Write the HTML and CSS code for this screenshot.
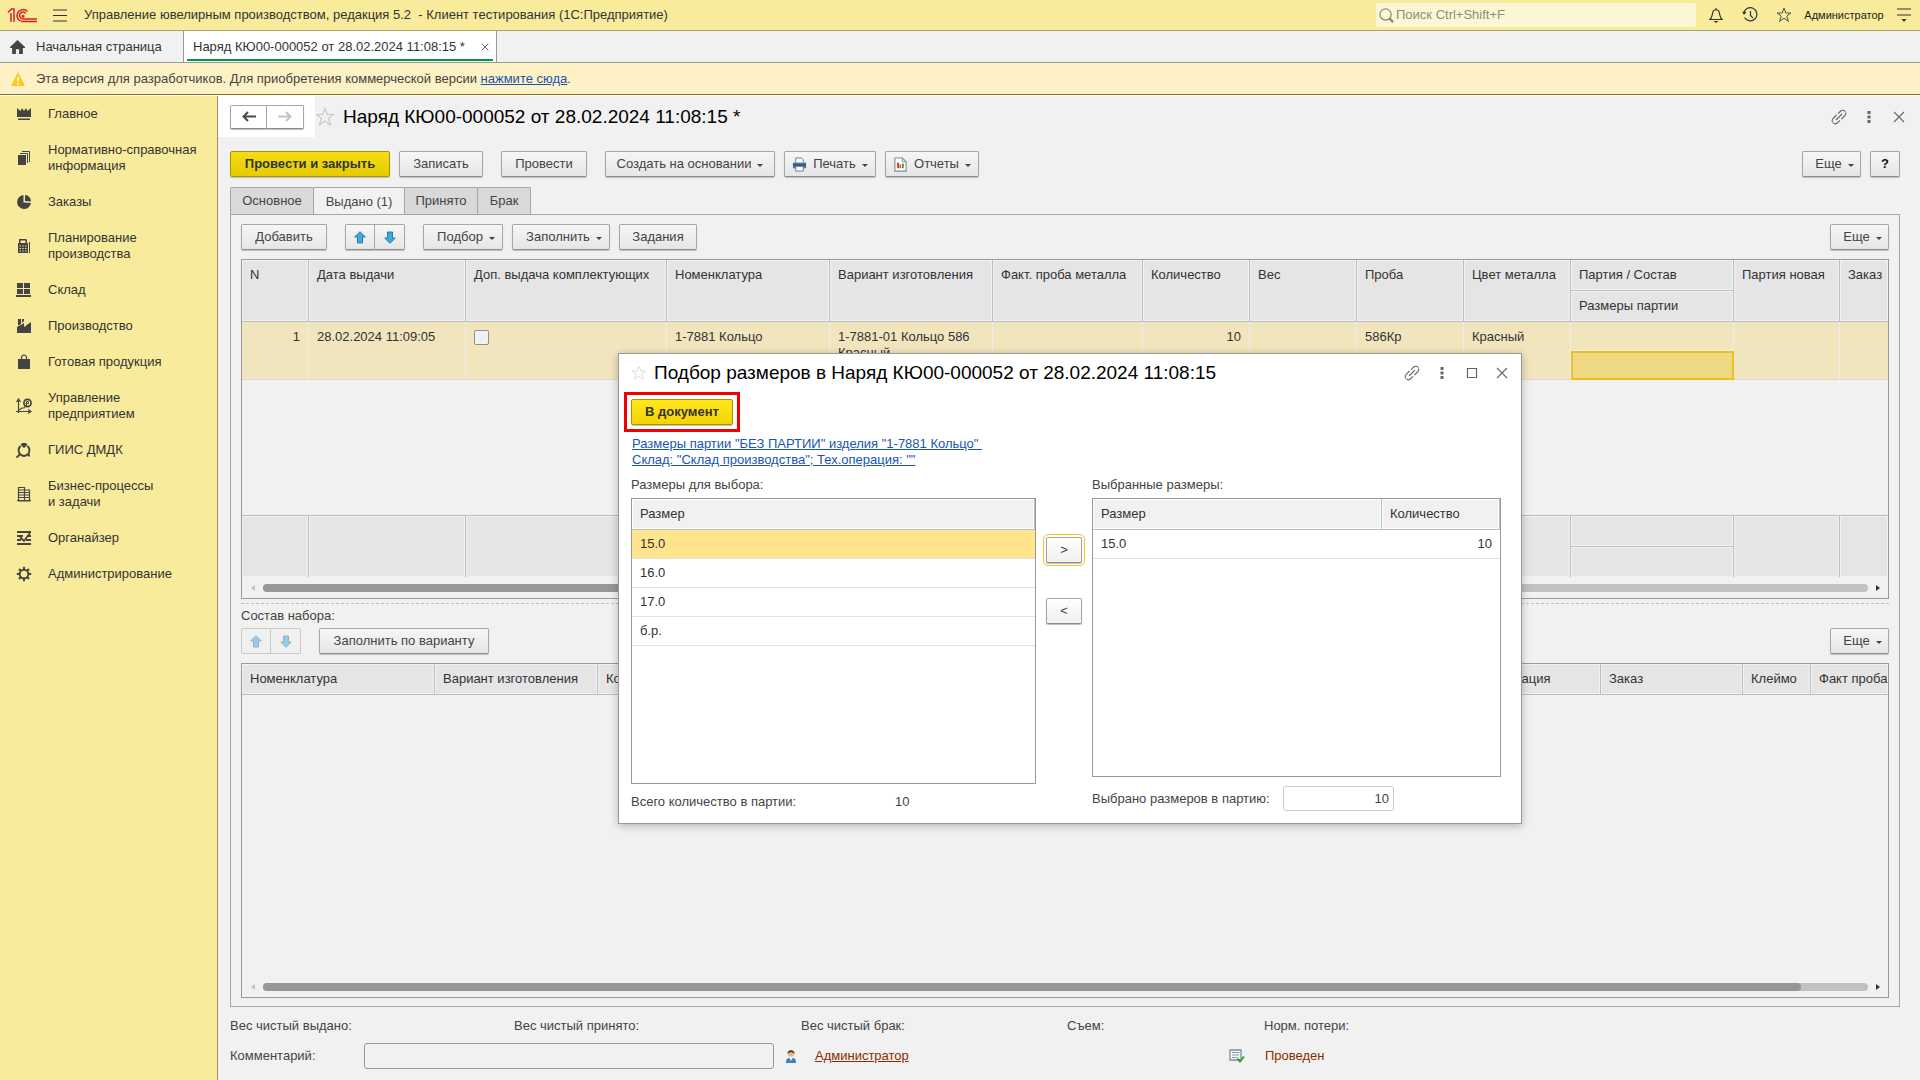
FILE: index.html
```html
<!DOCTYPE html>
<html lang="ru">
<head>
<meta charset="utf-8">
<title>Наряд КЮ00-000052</title>
<meta name="viewport" content="width=device-width, initial-scale=1">
<link rel="stylesheet" href="styles.css">
</head>
<body>
<svg class="defs" aria-hidden="true">
  <symbol id="i-star" viewBox="0 0 20 20"><path d="M10 1.500l2.300 6h6.200l-5 3.900 2 6.600-5.500-4-5.500 4 2-6.600-5-3.900h6.200z" fill="none" stroke="currentColor" stroke-width="1.200"/></symbol>
  <symbol id="i-link" viewBox="0 0 16 16"><g fill="none" stroke="currentColor" stroke-width="1.100"><path d="M5.500 6L2 9.500C-.5 12.500 3.300 16.500 6.300 14L9 11.300M7 4.700L9.700 2C12.700-.5 16.500 3.300 14 6.300L10.500 10M5 11l6-6" stroke-dasharray="9 .8"/></g></symbol>
  <symbol id="i-dots" viewBox="0 0 4 12"><path d="M.5 0h3v3h-3zM.5 4.500h3v3h-3zM.5 9h3v3h-3z" fill="currentColor"/></symbol>
  <symbol id="i-close" viewBox="0 0 12 12"><path d="M1 1l10 10M11 1L1 11" stroke="currentColor" stroke-width="1.100"/></symbol>
  <symbol id="i-up" viewBox="0 0 12 13"><path d="M6 .7L11.300 6H8.500v6h-5V6H.7z" fill="#3fa9e0" stroke="#22719d" stroke-width=".9"/></symbol>
  <symbol id="i-down" viewBox="0 0 12 13"><path d="M6 12.300L11.300 7H8.500V1h-5v6H.7z" fill="#3fa9e0" stroke="#22719d" stroke-width=".9"/></symbol>
</svg>

<header class="topbar">
  <svg class="logo" viewBox="0 0 31 16" role="img" aria-label="1С"><g fill="none" stroke="#d5202a" stroke-width="1.500"><path d="M1 5.500L4.500 2H7v13M4 15V6"/><path d="M20.500 4.600A6 6 0 1 0 15.500 14.600H30"/><path d="M18.700 6.500A3.400 3.400 0 1 0 15.800 11.900H30"/><path d="M16 8.500a.8.8 0 1 0 .1 0"/></g></svg>
  <button class="icon-btn menu-btn" aria-label="Меню"><svg viewBox="0 0 14 13"><path d="M0 1h14M0 6.500h14M0 12h14" stroke="#333" stroke-width="1.200"/></svg></button>
  <div class="app-title">Управление ювелирным производством, редакция 5.2 &nbsp;- Клиент тестирования (1С:Предприятие)</div>
  <div class="search">
    <svg viewBox="0 0 16 16"><circle cx="7" cy="7" r="6" fill="none" stroke="#8a8a72" stroke-width="1.300"/><path d="M11 11l4 4" stroke="#8a8a72" stroke-width="2.500"/></svg>
    <input type="text" placeholder="Поиск Ctrl+Shift+F" aria-label="Поиск">
  </div>
  <nav class="top-tools">
    <button class="icon-btn" aria-label="Уведомления"><svg viewBox="0 0 16 16"><path d="M8 1v1.500M2 12.500c2-2 2-3.500 2.500-6C5 1.500 11 1.500 11.500 6.500c.5 2.500.5 4 2.500 6z" fill="none" stroke="#333" stroke-width="1.200"/><path d="M5.500 14h5L8 16z" fill="#333"/></svg></button>
    <button class="icon-btn" aria-label="История"><svg viewBox="0 0 16 16"><path d="M2.500 10.500a6.600 6.600 0 1 0-.8-4M8.500 4v4.500l2.500 2.500" fill="none" stroke="#333" stroke-width="1.200"/><path d="M0 4.500l2 3.500 2.500-3z" fill="#333"/></svg></button>
    <button class="icon-btn" aria-label="Избранное"><svg viewBox="0 0 20 20"><use href="#i-star"/></svg></button>
    <button class="user-name">Администратор</button>
    <button class="icon-btn" aria-label="Сервис"><svg viewBox="0 0 14 14"><path d="M0 1h14M0 7h14" stroke="#333" stroke-width="1.200"/><path d="M4.500 11h5L7 14z" fill="#333"/></svg></button>
  </nav>
</header>

<nav class="window-tabs">
  <a class="window-tab home" href="#"><svg viewBox="0 0 14 13"><path d="M7 0L0 6.500V7.500H2V13H5.500V8.500h3V13H12V7.500h2V6.500z" fill="#444"/></svg>Начальная страница</a>
  <div class="window-tab current"><a href="#">Наряд КЮ00-000052 от 28.02.2024 11:08:15 *</a><button class="icon-btn tab-close" aria-label="Закрыть"><svg viewBox="0 0 12 12"><use href="#i-close"/></svg></button></div>
</nav>

<div class="banner">
  <svg viewBox="0 0 14 14"><path d="M7 0l7 14H0z" fill="#fbca1d"/><path d="M7 5v4.500M7 11v1.700" stroke="#fff" stroke-width="1.500"/></svg>
  <p>Эта версия для разработчиков. Для приобретения коммерческой версии <a href="#">нажмите сюда</a>.</p>
</div>

<div class="workspace">
  <nav class="sidebar">
    <a href="#"><svg viewBox="0 0 16 16"><path d="M1 2l3.500 3L6 2l2 3 2-3 1.500 3L15 2v9H1zM2 12.500h12V14H2z"/></svg><span>Главное</span></a>
    <a href="#"><svg viewBox="0 0 16 16"><path d="M2 5h8v10H2z"/><path d="M4 3.500h7.500V13M6 1.500h7.500V12" fill="none" stroke="#444" stroke-width="1"/></svg><span>Нормативно-справочная<br>информация</span></a>
    <a href="#"><svg viewBox="0 0 16 16"><path d="M7.500 1v7.500L15 9A7 7 0 1 1 7.500 1zM9 1a6.300 6.300 0 0 1 6 6.500L9 7z"/></svg><span>Заказы</span></a>
    <a href="#"><svg viewBox="0 0 16 16"><path d="M2 5h10v10H2zM3 1h7l1 1v3H3zM13 4h1v11h-1z"/><path d="M4.500 2.500h5V5h-5z" fill="#f9eb9c"/><path d="M3.500 8h7M3.500 10.500h7M3.500 13h7" stroke="#f9eb9c" stroke-width="1.200" stroke-dasharray="1.400 1.400"/></svg><span>Планирование<br>производства</span></a>
    <a href="#"><svg viewBox="0 0 16 16"><path d="M1 1h6v5H1zM8 1h6v5H8zM1 7h6v5H1zM8 7h6v5H8zM0 13h15v2H0z"/></svg><span>Склад</span></a>
    <a href="#"><svg viewBox="0 0 16 16"><path d="M1 15V9l7-4v4l7-5v11zM2 1h3v5L2 7.500zM6 1h2v2L6 5z"/></svg><span>Производство</span></a>
    <a href="#"><svg viewBox="0 0 16 16"><path d="M2 5h12v10H2z"/><path d="M5.500 8V4c0-4 5-4 5 0v4" fill="none" stroke="#444" stroke-width="1.200"/></svg><span>Готовая продукция</span></a>
    <a href="#"><svg viewBox="0 0 16 16"><path d="M2.500 15V1M0 13.500h15M.5 4l2-3 2 3M12 11.500l3 2-3 2M3 12l3-2 2 0 3-4" fill="none" stroke="#444" stroke-width="1.200"/><circle cx="11.500" cy="5" r="3.600" fill="#f9eb9c" stroke="#444" stroke-width="1.700"/><path d="M10.500 8V3.500h2v2h-3" fill="none" stroke="#444"/></svg><span>Управление<br>предприятием</span></a>
    <a href="#"><svg viewBox="0 0 16 16"><path d="M6 1h4l1.500 2L8 6 4.500 3z"/><path d="M4.500 4C1.500 7 2.500 11 4.500 12.500 7 14.500 9 14.500 11.500 12.500 13.500 11 14.500 7 11.500 4M4.500 12L.5 15.500M12 13.500h2" fill="none" stroke="#444" stroke-width="1.900"/></svg><span>ГИИС ДМДК</span></a>
    <a href="#"><svg viewBox="0 0 16 16"><path d="M2.500 1.500h6V15h-6zM8.500 4h5v11h-5zM1 14.500h14M2.500 4h6M2.500 6.500h6M2.500 9h6M2.500 11.500h6M8.500 6.500h5M8.500 9h5M8.500 11.500h5" fill="none" stroke="#444" stroke-width="1.200"/></svg><span>Бизнес-процессы<br>и задачи</span></a>
    <a href="#"><svg viewBox="0 0 16 16"><path d="M1 2h14M1 6h6M12 6h3M1 10h4M10 10h5M1 14h14" stroke="#444" stroke-width="2"/><path d="M4 7l4 4 6-8" fill="none" stroke="#444" stroke-width="1.800"/></svg><span>Органайзер</span></a>
    <a href="#"><svg viewBox="0 0 16 16"><circle cx="8" cy="8" r="4.300" fill="none" stroke="#444" stroke-width="1.900"/><path d="M8 .8v3M8 12.200v3M.8 8h3M12.200 8h3M3 3l2 2M11 11l2 2M13 3l-2 2M5 11l-2 2" stroke="#444" stroke-width="2"/></svg><span>Администрирование</span></a>
  </nav>

  <main class="form">
    <div class="form-head">
      <div class="history">
        <div class="btn-pair">
          <button class="btn" aria-label="Назад"><svg class="nav-arrow" viewBox="0 0 14 11"><path d="M6 1L1.500 5.500 6 10M1.500 5.500H14" fill="none" stroke="#4a4a4a" stroke-width="2"/></svg></button>
          <button class="btn" aria-label="Вперед" disabled><svg class="nav-arrow" viewBox="0 0 14 11"><path d="M8 1l4.500 4.500L8 10M12.500 5.500H0" fill="none" stroke="#c4c4c4" stroke-width="2"/></svg></button>
        </div>
      </div>
      <button class="icon-btn fav" aria-label="В избранное"><svg viewBox="0 0 20 20"><use href="#i-star"/></svg></button>
      <h1>Наряд КЮ00-000052 от 28.02.2024 11:08:15 *</h1>
      <div class="win-tools">
        <button class="icon-btn" aria-label="Ссылка"><svg viewBox="0 0 16 16"><use href="#i-link"/></svg></button>
        <button class="icon-btn" aria-label="Еще"><svg viewBox="0 0 4 12" class="dots"><use href="#i-dots"/></svg></button>
        <button class="icon-btn" aria-label="Закрыть"><svg class="x" viewBox="0 0 12 12"><use href="#i-close"/></svg></button>
      </div>
    </div>

    <div class="commands">
      <button class="btn primary w160">Провести и закрыть</button>
      <button class="btn w84 gap-after">Записать</button>
      <button class="btn w86 gap-after">Провести</button>
      <button class="btn w170">Создать на основании<i class="caret"></i></button>
      <button class="btn w92"><svg class="cmd-icon" viewBox="0 0 16 16"><path d="M4 6V1h6l2 2v3" fill="#fff" stroke="#5b7c98"/><path d="M1 6h14v6H1z" fill="#4e7397"/><path d="M1 8.500h14" stroke="#27445f"/><path d="M4 10h8v5H4z" fill="#fff" stroke="#5b7c98"/></svg>Печать<i class="caret"></i></button>
      <button class="btn w94"><svg class="cmd-icon" viewBox="0 0 16 16"><path d="M2 1h8l4 4v10H2z" fill="#fff" stroke="#7d8b98" stroke-width="1.200"/><path d="M10 1v4h4" fill="none" stroke="#7d8b98"/><path d="M4.500 6h2v6h-2z" fill="#e02a1c"/><path d="M7 8h1.500v4H7z" fill="#d9531e"/><path d="M9.500 7h2v5h-2z" fill="#3a9b35"/></svg>Отчеты<i class="caret"></i></button>
      <span class="spacer"></span>
      <button class="btn w59">Еще<i class="caret"></i></button>
      <button class="btn help">?</button>
    </div>

    <div class="tabs" role="tablist">
      <button role="tab" class="tab w84">Основное</button>
      <button role="tab" class="tab active w92" aria-selected="true">Выдано (1)</button>
      <button role="tab" class="tab w74">Принято</button>
      <button role="tab" class="tab w54">Брак</button>
    </div>

    <section class="panel">
      <div class="commands">
        <button class="btn w86 gap-after">Добавить</button>
        <div class="btn-pair gap-after">
          <button class="btn" aria-label="Вверх"><svg class="arrow" viewBox="0 0 12 13"><use href="#i-up"/></svg></button>
          <button class="btn" aria-label="Вниз"><svg class="arrow" viewBox="0 0 12 13"><use href="#i-down"/></svg></button>
        </div>
        <button class="btn w80">Подбор<i class="caret"></i></button>
        <button class="btn w98">Заполнить<i class="caret"></i></button>
        <button class="btn w78">Задания</button>
        <span class="spacer"></span>
        <button class="btn w59">Еще<i class="caret"></i></button>
      </div>

      <div class="grid-box issued">
        <table class="grid">
          <colgroup><col class="c67"><col class="c157"><col class="c201"><col class="c163"><col class="c163"><col class="c150"><col class="c107"><col class="c107"><col class="c107"><col class="c107"><col class="c163"><col class="c106"><col></colgroup>
          <thead>
            <tr><th rowspan="2">N</th><th rowspan="2">Дата выдачи</th><th rowspan="2">Доп. выдача комплектующих</th><th rowspan="2">Номенклатура</th><th rowspan="2">Вариант изготовления</th><th rowspan="2">Факт. проба металла</th><th rowspan="2">Количество</th><th rowspan="2">Вес</th><th rowspan="2">Проба</th><th rowspan="2">Цвет металла</th><th>Партия / Состав</th><th rowspan="2">Партия новая</th><th rowspan="2">Заказ</th></tr>
            <tr><th>Размеры партии</th></tr>
          </thead>
          <tbody>
            <tr><td rowspan="2" class="num">1</td><td rowspan="2">28.02.2024 11:09:05</td><td rowspan="2"><input type="checkbox" aria-label="Доп. выдача комплектующих"></td><td rowspan="2">1-7881 Кольцо</td><td rowspan="2">1-7881-01 Кольцо 586 Красный</td><td rowspan="2"></td><td rowspan="2" class="num">10</td><td rowspan="2"></td><td rowspan="2">586Кр</td><td rowspan="2">Красный</td><td></td><td rowspan="2"></td><td rowspan="2"></td></tr>
            <tr><td class="cell-current"></td></tr>
          </tbody>
        </table>
        <span class="spacer"></span>
        <table class="grid totals" aria-hidden="true">
          <colgroup><col class="c67"><col class="c157"><col class="c201"><col class="c163"><col class="c163"><col class="c150"><col class="c107"><col class="c107"><col class="c107"><col class="c107"><col class="c163"><col class="c106"><col></colgroup>
          <tfoot>
            <tr><td rowspan="2"></td><td rowspan="2"></td><td rowspan="2"></td><td rowspan="2"></td><td rowspan="2"></td><td rowspan="2"></td><td rowspan="2"></td><td rowspan="2"></td><td rowspan="2"></td><td rowspan="2"></td><td></td><td rowspan="2"></td><td rowspan="2"></td></tr>
            <tr><td></td></tr>
          </tfoot>
        </table>
        <div class="scroll"><i class="left"></i><div class="track"><div class="thumb" style="width:76%"></div></div><i class="right"></i></div>
      </div>

      <div class="splitter"></div>
      <div class="label">Состав набора:</div>
      <div class="commands">
        <div class="btn-pair dim gap-after">
          <button class="btn" aria-label="Вверх" disabled><svg class="arrow" viewBox="0 0 12 13"><use href="#i-up"/></svg></button>
          <button class="btn" aria-label="Вниз" disabled><svg class="arrow" viewBox="0 0 12 13"><use href="#i-down"/></svg></button>
        </div>
        <button class="btn w170">Заполнить по варианту</button>
        <span class="spacer"></span>
        <button class="btn w59">Еще<i class="caret"></i></button>
      </div>

      <div class="grid-box kit">
        <table class="grid">
          <colgroup><col class="c193"><col class="c163"><col><col class="c144"><col class="c142"><col class="c68"><col class="c77"></colgroup>
          <thead><tr><th>Номенклатура</th><th>Вариант изготовления</th><th>Количество</th><th>Тех. операция</th><th>Заказ</th><th>Клеймо</th><th>Факт проба</th></tr></thead>
        </table>
        <span class="spacer"></span>
        <div class="scroll"><i class="left"></i><div class="track"><div class="thumb" style="width:95.8%"></div></div><i class="right"></i></div>
      </div>
    </section>

    <footer class="summary">
      <span>Вес чистый выдано:</span><span>Вес чистый принято:</span><span>Вес чистый брак:</span><span>Съем:</span><span>Норм. потери:</span>
    </footer>
    <div class="comment-row">
      <label for="comment">Комментарий:</label>
      <input id="comment" type="text">
      <svg class="person" viewBox="0 0 12 14"><path d="M1 14c0-5 2-5 5-5s5 0 5 5z" fill="#3787b8"/><path d="M4.500 9L6 12l1.500-3z" fill="#fff"/><circle cx="6" cy="4.500" r="3.200" fill="#e9b87a"/><path d="M2.500 5C2 0 10 0 9.500 5 8 2.500 4 2.500 2.500 5z" fill="#4b3a28"/></svg>
      <a class="author" href="#">Администратор</a>
      <svg class="posted" viewBox="0 0 16 14"><path d="M1 1h11v10H1z" fill="#f7fafc" stroke="#7e8f9e" stroke-width="1.300"/><path d="M3 3.500h7M3 6h7M3 8.500h5" stroke="#8796a3"/><path d="M8.500 9.500l2.500 3 4-5" fill="none" stroke="#25a53a" stroke-width="2"/></svg>
      <span class="status">Проведен</span>
    </div>
  </main>
</div>

<div class="dialog" role="dialog" aria-labelledby="dlg-title">
  <div class="dlg-head">
    <button class="icon-btn fav" aria-label="В избранное"><svg viewBox="0 0 20 20"><use href="#i-star"/></svg></button>
    <h2 id="dlg-title">Подбор размеров в Наряд КЮ00-000052 от 28.02.2024 11:08:15</h2>
    <div class="win-tools">
      <button class="icon-btn" aria-label="Ссылка"><svg viewBox="0 0 16 16"><use href="#i-link"/></svg></button>
      <button class="icon-btn" aria-label="Еще"><svg viewBox="0 0 4 12" class="dots"><use href="#i-dots"/></svg></button>
      <button class="icon-btn" aria-label="Развернуть"><svg class="x" viewBox="0 0 12 12"><path d="M1.500 1.500h9v9h-9z" fill="none" stroke="currentColor" stroke-width="1.200"/></svg></button>
      <button class="icon-btn" aria-label="Закрыть"><svg class="x" viewBox="0 0 12 12"><use href="#i-close"/></svg></button>
    </div>
  </div>
  <div class="highlight"><button class="btn primary bright w102">В документ</button></div>
  <a class="source" href="#">Размеры партии "БЕЗ ПАРТИИ" изделия "1-7881 Кольцо"&nbsp;<br>Склад: "Склад производства"; Тех.операция: ""</a>
  <div class="picker">
    <div class="pane">
      <div class="pane-label">Размеры для выбора:</div>
      <div class="list-box tall">
        <table class="list">
          <thead><tr><th>Размер</th></tr></thead>
          <tbody><tr class="selected"><td>15.0</td></tr><tr><td>16.0</td></tr><tr><td>17.0</td></tr><tr><td>б.р.</td></tr></tbody>
        </table>
      </div>
      <div class="total"><span>Всего количество в партии:</span><output>10</output></div>
    </div>
    <div class="movers">
      <button class="btn focused">&gt;</button>
      <button class="btn">&lt;</button>
    </div>
    <div class="pane">
      <div class="pane-label">Выбранные размеры:</div>
      <div class="list-box">
        <table class="list">
          <colgroup><col><col class="c118"></colgroup>
          <thead><tr><th>Размер</th><th>Количество</th></tr></thead>
          <tbody><tr><td>15.0</td><td class="num">10</td></tr></tbody>
        </table>
      </div>
      <div class="picked"><label for="picked">Выбрано размеров в партию:</label><input id="picked" type="text" value="10"></div>
    </div>
  </div>
</div>
</body>
</html>
```
FILE: styles.css
```css
* { box-sizing: border-box; }
body {
  margin: 0;
  min-height: 100vh;
  display: flex;
  flex-direction: column;
  position: relative;
  background: #f1f1f1;
  color: #444;
  font: 13px/16px "Liberation Sans", Arial, sans-serif;
}
button, input { font: inherit; color: inherit; }
button { cursor: pointer; white-space: nowrap; }
h1, h2, p { margin: 0; font-weight: normal; }
svg { display: block; flex: none; }
.defs { position: absolute; width: 0; height: 0; }
.spacer { flex: 1; }

.icon-btn {
  display: flex;
  align-items: center;
  justify-content: center;
  padding: 0;
  border: 0;
  background: none;
}

/* top bar */
.topbar {
  display: flex;
  align-items: center;
  height: 31px;
  padding: 0 9px 0 7px;
  background: #f9eb9c;
  border-bottom: 1px solid #aba46c;
}
.logo { width: 31px; height: 16px; }
.menu-btn { width: 14px; margin: 0 17px 0 15px; }
.menu-btn svg { width: 14px; height: 13px; }
.app-title { color: #333; white-space: nowrap; }
.search {
  display: flex;
  align-items: center;
  gap: 2px;
  width: 320px;
  height: 24px;
  margin-left: auto;
  padding-left: 3px;
  border-radius: 2px;
  background: #fdf6d5;
}
.search svg { width: 15px; height: 15px; }
.search input { flex: 1; min-width: 0; padding: 0; border: 0; outline: 0; background: none; }
.search input::placeholder { color: #8f8d7c; opacity: 1; }
.top-tools { display: flex; align-items: center; gap: 18px; margin-left: 12px; }
.top-tools svg { width: 16px; height: 16px; }
.top-tools > .icon-btn:last-child svg { width: 14px; height: 14px; }
.user-name { width: 80px; margin: 0 -5px 0 -6px; padding: 0; border: 0; background: none; font-size: 11px; color: #222; }

/* open windows */
.window-tabs { display: flex; height: 32px; border-bottom: 1px solid #999; }
.window-tab { display: flex; align-items: center; color: #333; text-decoration: none; white-space: nowrap; }
.window-tab a { color: inherit; text-decoration: none; }
.home { width: 183px; padding-left: 10px; gap: 11px; }
.home svg { width: 15px; height: 14px; }
.current {
  position: relative;
  width: 314px;
  padding: 0 7px 0 9px;
  justify-content: space-between;
  background: #fff;
  border: solid #999;
  border-width: 0 1px;
}
.current::after { content: ""; position: absolute; left: 3px; right: 3px; bottom: 1px; height: 2px; background: #009646; }
.tab-close svg { width: 8px; height: 8px; }

.banner {
  display: flex;
  align-items: center;
  gap: 11px;
  height: 32px;
  padding-left: 11px;
  background: #fdf1c5;
  border-bottom: 1px solid #8f7614;
}
.banner svg { width: 14px; height: 14px; }
.banner a { color: #1a55b0; }

.workspace { flex: 1; display: flex; border-top: 1px solid #fff; }

/* sections */
.sidebar { flex: none; width: 218px; background: #f9eb9c; border-right: 1px solid #999166; }
.sidebar a { display: flex; align-items: center; gap: 16px; padding: 10px 0 10px 16px; color: #333; text-decoration: none; }
.sidebar svg { width: 16px; height: 16px; fill: #444; }

/* buttons */
.btn {
  display: inline-flex;
  align-items: center;
  justify-content: center;
  flex: none;
  height: 26px;
  padding: 0;
  border: 1px solid #a6a6a6;
  border-bottom-color: #8c8c8c;
  border-radius: 2px;
  background: linear-gradient(#f6f6f6, #e6e6e6);
  box-shadow: 0 1px 1px #bdbdbd;
}
.primary { background: linear-gradient(#f5dc14, #e6cb00); border-color: #a89300; font-weight: bold; color: #333; }
.bright { background: linear-gradient(#ffe71c, #f5d400); }
.help { width: 30px; font-weight: bold; color: #111; }
.w54 { width: 54px; } .w59 { width: 59px; } .w74 { width: 74px; } .w78 { width: 78px; } .w80 { width: 80px; }
.w84 { width: 84px; } .w86 { width: 86px; } .w92 { width: 92px; } .w94 { width: 94px; } .w98 { width: 98px; }
.w102 { width: 102px; } .w160 { width: 160px; } .w170 { width: 170px; }
.caret { margin: 3px 0 0 6px; border: solid transparent; border-width: 3px 3px 0; border-top-color: #444; }
.w59, .w80, .w98 { padding-left: 6px; }
.cmd-icon { width: 15px; height: 15px; margin-right: 6px; }
.btn-pair { display: flex; }
.btn-pair .btn { width: 30px; }
.btn-pair .btn + .btn { border-left: 0; border-radius: 0 2px 2px 0; }
.btn-pair .btn:first-child { border-radius: 2px 0 0 2px; }
.arrow { width: 12px; height: 13px; }
.dim .btn { border-color: #c8c8c8; box-shadow: none; background: #f0f0f0; }
.dim .arrow { opacity: .5; }
.commands { display: flex; gap: 9px; }
.gap-after { margin-right: 9px; }

/* form */
.form { flex: 1; min-width: 0; display: flex; flex-direction: column; padding: 0 20px 12px 12px; }
.form-head { display: flex; align-items: center; height: 41px; margin-bottom: 14px; }
.history { align-self: stretch; display: flex; align-items: center; margin-left: -12px; padding: 0 11px 0 12px; background: #fff; }
.history .btn-pair .btn { width: 37px; height: 24px; background: #fff; }
.nav-arrow { width: 14px; height: 11px; }
.fav { color: #c9c9c9; }
.fav svg { width: 20px; height: 20px; }
h1, h2 { font-size: 19px; line-height: 24px; color: #000; white-space: nowrap; }
h1 { margin-left: 8px; }
.win-tools { display: flex; margin-left: auto; margin-right: -14px; color: #666; }
.win-tools .icon-btn { width: 30px; height: 20px; }
.win-tools svg { width: 16px; height: 16px; }
.win-tools .dots { width: 4px; height: 12px; }
.win-tools .x { width: 12px; height: 12px; }

.tabs { display: flex; margin-top: 10px; }
.tab {
  height: 27px;
  padding: 0;
  margin-right: -1px;
  border: 1px solid #a6a6a6;
  border-bottom: 0;
  border-radius: 2px 2px 0 0;
  background: #d9d9d9;
}
.tab.active { height: 28px; margin-bottom: -1px; background: #f1f1f1; }

.panel { flex: 1; display: flex; flex-direction: column; border: 1px solid #a6a6a6; padding: 9px 10px 8px; }

/* data grids */
.grid-box { display: flex; flex-direction: column; margin-top: 9px; border: 1px solid #999; overflow: hidden; }
.issued { flex: 1 1 340px; }
.kit { flex: 1 1 335px; }
.grid, .list { width: 100%; border-collapse: separate; border-spacing: 0; table-layout: fixed; color: #333; }
.grid th {
  height: 31px;
  padding: 7px 0 0 8px;
  border: solid #bdbdbd;
  border-width: 0 1px 1px 0;
  background: #e5e5e5;
  box-shadow: inset 0 0 0 1px #f1f1f1;
  font-weight: normal;
  text-align: left;
  vertical-align: top;
  white-space: nowrap;
}
.grid tr > :last-child:not(:only-child) { border-right: 0; }
.grid td {
  height: 29px;
  padding: 7px 8px 0;
  border: solid #ececec;
  border-width: 0 1px 1px 0;
  background: #f1e5be;
  vertical-align: top;
}
.grid td[rowspan] { border-bottom-color: #d8d8d8; }
.num { text-align: right; }
.grid td.cell-current { background: #efd983; border: 2px solid #ecbf22; }
.grid input { display: block; appearance: none; width: 15px; height: 15px; margin: 1px 0; border: 1px solid #8f8f8f; border-radius: 2px; background: #f1f1f1; }
.totals td, .totals td[rowspan] { height: 31px; padding: 0; background: #e5e5e5; border: solid #bdbdbd; border-width: 1px 1px 0 0; box-shadow: inset 0 0 0 1px #f1f1f1; }
.scroll { display: flex; align-items: center; gap: 8px; height: 21px; padding: 0 8px 0 9px; }
.track { flex: 1; height: 8px; border-radius: 4px; background: #c1c1c1; }
.thumb { height: 8px; border-radius: 4px; background: #979797; }
.scroll i { border: solid transparent; border-width: 3px 0; }
.scroll .left { border-right: 4px solid #c1c1c1; }
.scroll .right { border-left: 4px solid #333; }
.splitter { margin-top: 4px; border-top: 1px dashed #bdbdbd; }
.label { margin: 4px 0; }

.c67 { width: 67px; } .c68 { width: 68px; } .c77 { width: 77px; } .c106 { width: 106px; } .c107 { width: 107px; }
.c118 { width: 118px; } .c142 { width: 142px; } .c144 { width: 144px; } .c150 { width: 150px; } .c157 { width: 157px; }
.c163 { width: 163px; } .c193 { width: 193px; } .c201 { width: 201px; }

/* totals and comment */
.summary { display: grid; grid-template-columns: 284px 287px 266px 197px 1fr; margin-top: 11px; }
.comment-row { display: flex; align-items: center; margin-top: 9px; }
.comment-row label { width: 134px; }
.comment-row input { width: 410px; height: 26px; border: 1px solid #999; border-radius: 3px; background: #f1f1f1; }
.person { width: 12px; height: 14px; margin: 0 18px 0 11px; }
.author, .status { color: #8b2c00; }
.author { width: 414px; }
.posted { width: 16px; height: 14px; margin-right: 20px; }

/* size picker window */
.dialog {
  position: absolute;
  left: 618px;
  top: 353px;
  width: 904px;
  padding: 0 20px 12px 12px;
  border: 1px solid #999;
  background: #fff;
  box-shadow: 0 2px 8px rgba(0, 0, 0, .25);
}
.dlg-head { display: flex; align-items: center; height: 38px; }
.dlg-head .fav { width: 15px; color: #dcdcdc; }
.dlg-head .fav svg { width: 16px; height: 16px; }
.dlg-head h2 { margin-left: 8px; }
.dlg-head .win-tools { margin-right: -16px; }
.highlight { display: inline-flex; margin-left: -7px; padding: 4px; border: 3px solid #f00000; }
.source { display: block; width: max-content; margin-top: 4px; padding-left: 1px; color: #1a55b0; }
.picker { display: grid; grid-template-columns: 405px 56px 409px; margin-top: 9px; }
.pane-label { margin-bottom: 5px; }
.list-box { height: 279px; border: 1px solid #999; background: #fff; }
.list-box.tall { height: 286px; }
.list th { height: 31px; padding: 0 8px; border: solid #bdbdbd; border-width: 0 1px 1px 0; background: #f1f1f1; box-shadow: inset 0 0 0 1px #fff; font-weight: normal; text-align: left; }
.list td { height: 29px; padding: 0 8px; border-bottom: 1px solid #e2e2e2; }
.list .selected td { background: #ffe48d; }
.movers { display: flex; flex-direction: column; align-items: center; gap: 35px; padding-top: 60px; }
.movers .btn { width: 36px; background: linear-gradient(#fff, #f0f0f0); }
.focused { outline: 1px solid #f5c71e; outline-offset: 2px; }
.total { display: flex; margin-top: 10px; }
.total span { width: 264px; }
.picked { display: flex; align-items: center; gap: 9px; margin-top: 9px; }
.picked label { width: 182px; }
.picked input { width: 111px; height: 25px; padding: 0 4px; border: 1px solid #ccc; border-radius: 3px; text-align: right; }
```
